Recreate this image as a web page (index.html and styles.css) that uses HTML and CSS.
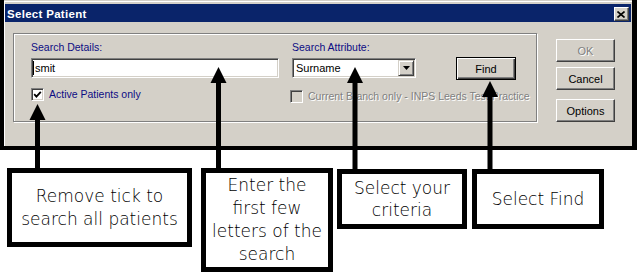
FILE: index.html
```html
<!DOCTYPE html>
<html>
<head>
<meta charset="utf-8">
<link rel="stylesheet" href="styles.css">
</head>
<body>
<div class="shot">
  <div class="dialog">
    <div class="titlebar">
      <span class="title">Select Patient</span>
      <span class="close"><svg width="8" height="7" viewBox="0 0 8 7"><path d="M0.5 0.5 L7.5 6.5 M7.5 0.5 L0.5 6.5" stroke="#000" stroke-width="1.6" fill="none"/></svg></span>
    </div>
    <div class="dlg-body">
      <div class="group">
        <div class="col col1">
          <div class="label">Search Details:</div>
          <div class="field"><span class="caret"></span>smit</div>
          <div class="checkrow">
            <span class="checkbox"><svg width="9" height="9" viewBox="0 0 9 9"><path d="M1.2 4.2 L3.4 6.6 L7.8 1.8" stroke="#000" stroke-width="1.8" fill="none"/></svg></span>
            <span class="checklabel">Active Patients only</span>
          </div>
        </div>
        <div class="col col2">
          <div class="label">Search Attribute:</div>
          <div class="field select"><span class="seltext">Surname</span><span class="dropbtn"><svg width="7" height="4" viewBox="0 0 7 4"><path d="M0 0 H7 L3.5 4 Z" fill="#000"/></svg></span></div>
          <div class="checkrow branch">
            <span class="checkbox disabled"></span>
            <span class="checklabel disabledtext">Current Branch only - INPS Leeds Test Practice</span>
          </div>
        </div>
        <div class="col col3">
          <div class="btn default"><span>Find</span></div>
        </div>
      </div>
      <div class="btncol">
        <div class="btn"><span class="disabledtext">OK</span></div>
        <div class="btn cancel"><span>Cancel</span></div>
        <div class="btn options"><span>Options</span></div>
      </div>
    </div>
  </div>
  <div class="callouts">
    <div class="callout c1">Remove tick to<br>search all patients</div>
    <div class="callout c2">Enter the<br>first few<br>letters of the<br>search</div>
    <div class="callout c3">Select your<br>criteria</div>
    <div class="callout c4">Select Find</div>
  </div>
  <svg class="arrows" width="637" height="274" viewBox="0 0 637 274">
    <rect x="35" y="118" width="5" height="52" fill="#000"/>
    <polygon points="37.5,104 29.5,120 45.5,120" fill="#000"/>
    <rect x="216" y="81" width="5" height="89" fill="#000"/>
    <polygon points="218.5,67 210.5,83 226.5,83" fill="#000"/>
    <rect x="352.5" y="81" width="5" height="90" fill="#000"/>
    <polygon points="355,67 347,83 363,83" fill="#000"/>
    <rect x="487.5" y="95" width="5" height="76" fill="#000"/>
    <polygon points="490,81 482,97 498,97" fill="#000"/>
  </svg>
</div>
</body>
</html>
```
FILE: styles.css
```css
html, body {
  margin: 0;
  padding: 0;
  background: #fff;
}
.shot {
  position: relative;
  width: 637px;
  height: 274px;
  background: #fff;
  overflow: hidden;
  font-family: "Liberation Sans", Arial, sans-serif;
  font-size: 10.5px;
}
.dialog {
  box-sizing: border-box;
  width: 637px;
  height: 150px;
  background: #D4D0C8;
  border-left: 4px solid #000;
  border-right: 5px solid #000;
  border-bottom: 4px solid #000;
  padding-top: 4px;
  box-shadow: inset 0 1px 0 #D4D0C8, inset 0 2px 0 #fff, inset 1px 0 0 #fff;
}
.titlebar {
  height: 18px;
  margin: 0 1px;
  background: #0A246A;
  display: flex;
  align-items: flex-start;
  justify-content: space-between;
}
.title {
  color: #fff;
  font-weight: bold;
  font-size: 11.5px;
  letter-spacing: 0.3px;
  line-height: 13px;
  padding: 4px 0 0 2px;
}
.close {
  box-sizing: border-box;
  width: 15px;
  height: 14px;
  margin: 3px 2px 0 0;
  background: #D4D0C8;
  border: 1px solid;
  border-color: #fff #404040 #404040 #fff;
  box-shadow: inset -1px -1px 0 #808080;
  display: flex;
  align-items: center;
  justify-content: center;
}
.close svg { display: block; margin-left: -1px; }
.dlg-body {
  display: flex;
  align-items: flex-start;
  padding: 11px 0 0 9px;
}
.group {
  box-sizing: border-box;
  width: 524px;
  height: 89px;
  border: 1px solid #808080;
  box-shadow: 1px 1px 0 #fff, inset 1px 1px 0 #fff;
  display: flex;
  align-items: flex-start;
  padding: 6px 0 0 17px;
}
.col1 { width: 248px; }
.col2 { width: 124px; margin-left: 13px; }
.col3 { margin-left: 40px; padding-top: 17px; }
.label {
  color: #0C0C84;
  height: 14px;
  line-height: 14px;
  margin-bottom: 4px;
  white-space: nowrap;
}
.field {
  box-sizing: border-box;
  height: 20px;
  background: #fff;
  border: 1px solid;
  border-color: #808080 #fff #fff #808080;
  box-shadow: inset 1px 1px 0 #404040, inset -1px -1px 0 #D4D0C8;
  display: flex;
  align-items: center;
  padding-left: 1px;
  color: #000;
  font-size: 11px;
}
.caret {
  width: 1px;
  height: 14px;
  background: #000;
  margin-right: 1px;
}
.select { justify-content: space-between; padding-left: 3px; padding-right: 1px; }
.dropbtn {
  box-sizing: border-box;
  width: 16px;
  height: 16px;
  background: #D4D0C8;
  border: 1px solid;
  border-color: #D4D0C8 #404040 #404040 #D4D0C8;
  box-shadow: inset 1px 1px 0 #fff, inset -1px -1px 0 #808080;
  display: flex;
  align-items: center;
  justify-content: center;
}
.dropbtn svg { display: block; }
.checkrow {
  display: flex;
  align-items: center;
  margin-top: 10px;
  white-space: nowrap;
}
.branch { margin-top: 12px; margin-left: -2px; }
.checkbox {
  box-sizing: border-box;
  width: 13px;
  height: 13px;
  flex: none;
  background: #fff;
  border: 1px solid;
  border-color: #808080 #fff #fff #808080;
  box-shadow: inset 1px 1px 0 #404040, inset -1px -1px 0 #D4D0C8;
  display: flex;
  align-items: center;
  justify-content: center;
}
.checkbox svg { display: block; }
.checkbox.disabled { background: #D4D0C8; }
.checklabel {
  margin-left: 5px;
  color: #0C0C84;
  line-height: 13px;
}
.disabledtext {
  color: #808080;
  text-shadow: 1px 1px 0 #fff;
}
.btncol {
  margin-left: 19px;
  padding-top: 6px;
  display: flex;
  flex-direction: column;
}
.btn {
  box-sizing: border-box;
  width: 59px;
  height: 23px;
  background: #D4D0C8;
  border: 1px solid;
  border-color: #fff #404040 #404040 #fff;
  box-shadow: inset -1px -1px 0 #808080;
  display: flex;
  align-items: center;
  justify-content: center;
  color: #000;
  font-size: 11px;
}
.btn.cancel { margin-top: 5px; }
.btn.options { margin-top: 9px; }
.btn.default {
  width: 60px;
  border: 1px solid #000;
  box-shadow: inset 1px 1px 0 #fff, inset -1px -1px 0 #404040, inset -2px -2px 0 #808080;
}
.callouts {
  display: flex;
  align-items: flex-start;
  padding: 18px 0 0 7px;
}
.callout {
  box-sizing: border-box;
  border: 5px solid #000;
  background: #fff;
  display: flex;
  align-items: center;
  justify-content: center;
  text-align: center;
  font-family: "DejaVu Sans", sans-serif;
  font-weight: 200;
  font-size: 17px;
  line-height: 23px;
  color: #000;
}
.c1 { width: 185px; height: 79px; }
.c2 { width: 132px; height: 104px; margin-left: 9px; }
.c3 { width: 130px; height: 60px; margin-left: 4px; margin-top: 1px; line-height: 22px; }
.c4 { width: 132px; height: 60px; margin-left: 5px; margin-top: 1px; }
.arrows {
  position: absolute;
  left: 0;
  top: 0;
  pointer-events: none;
}
```
